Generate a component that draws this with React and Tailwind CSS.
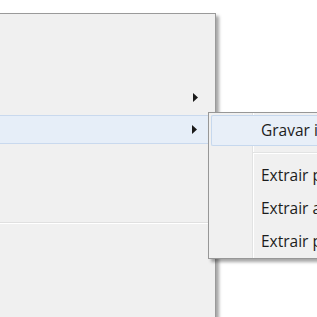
const Arrow = () => (
  <svg width="5" height="9" viewBox="0 0 5 9" className="block">
    <path d="M0 0 L5 4.5 L0 9 Z" fill="#1a1a1a" />
  </svg>
);

const App = () => {
  return (
    <div
      className="relative w-[317px] h-[317px] overflow-hidden bg-white text-[#1c1c1c]"
      style={{ fontFamily: '"Open Sans", "Noto Sans", sans-serif' }}
    >
      {/* menu principal */}
      <div className="mt-[13px] w-[216px] h-[330px] bg-[#f0f0f0] border-t border-r border-[#9a9a9a] shadow-[3px_3px_3px_rgba(0,0,0,0.35)]">
        <div className="h-[67px]"></div>
        <div className="h-[32px] flex items-center justify-end pr-[17px]">
          <Arrow />
        </div>
        <div className="h-[32px] pt-[2px] pb-[1px] pr-[2px]">
          <div className="h-full flex items-center justify-end pr-[15px] bg-[#e6eef8] border border-l-0 border-[#c9d9ee] rounded-r-[2px]">
            <Arrow />
          </div>
        </div>
        <div className="h-[77px]"></div>
        <div className="h-px bg-[#e0e0e0]"></div>
        <div className="h-px bg-white"></div>
      </div>

      {/* submenu */}
      <div className="absolute left-[208px] top-[112px] w-[130px] bg-[#f0f0f0] border border-[#979797] shadow-[3px_3px_3px_rgba(0,0,0,0.35)] pt-[2px] pl-[2px]">
        <div className="absolute left-[43px] top-0 bottom-0 w-px bg-[#e2e3e3]"></div>
        <div className="absolute left-[44px] top-0 bottom-0 w-px bg-white"></div>
        <div className="relative h-[31px] flex items-center pl-[49px] text-[15.5px] whitespace-nowrap bg-[#e8eff8] border border-r-0 border-[#c6d8ee] rounded-l-[2px]">
          Gravar imagem de disco
        </div>
        <div className="relative h-[13px] flex flex-col justify-center pl-[42px]">
          <div className="h-px bg-[#e2e3e3]"></div>
          <div className="h-px bg-white"></div>
        </div>
        <div className="relative h-[33px] flex items-center pl-[50px] text-[15.5px] whitespace-nowrap">
          Extrair para
        </div>
        <div className="relative h-[33px] flex items-center pl-[50px] text-[15.5px] whitespace-nowrap">
          Extrair aqui
        </div>
        <div className="relative h-[33px] flex items-center pl-[50px] text-[15.5px] whitespace-nowrap">
          Extrair para a pasta
        </div>
      </div>
    </div>
  );
};

export default App;
